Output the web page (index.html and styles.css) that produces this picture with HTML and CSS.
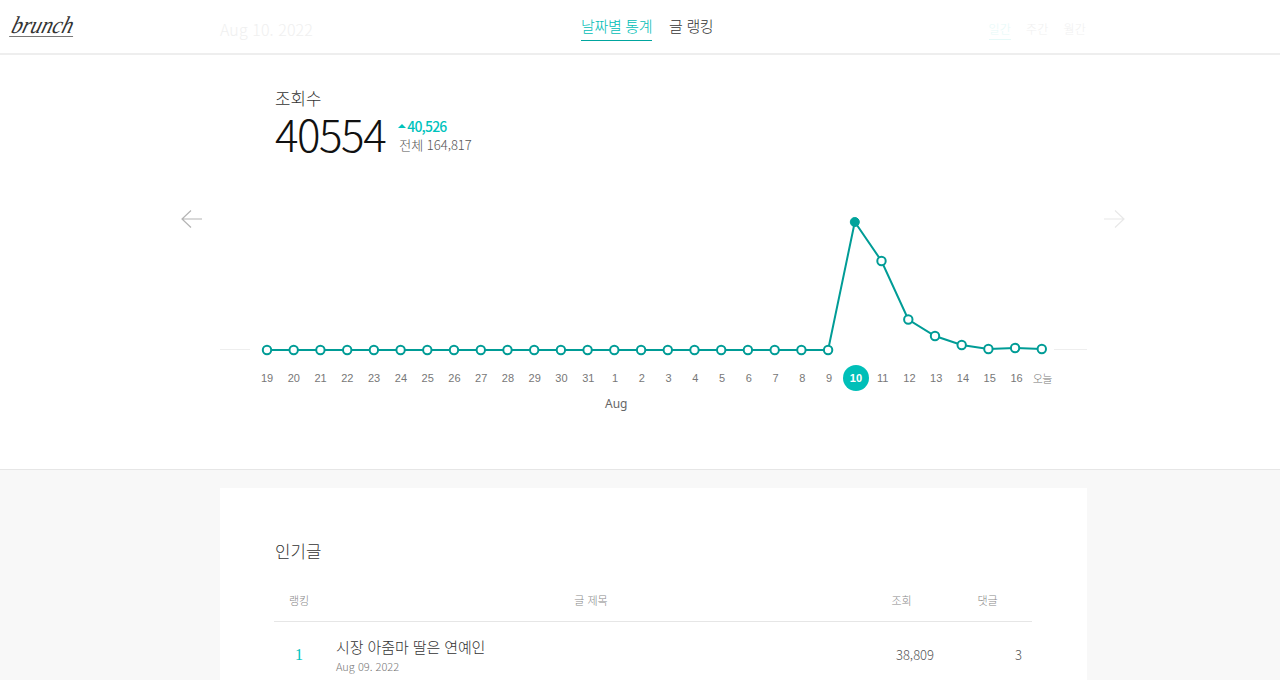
FILE: index.html
```html
<!DOCTYPE html>
<html lang="ko">
<head>
<meta charset="utf-8">
<title>brunch 통계</title>
<link rel="stylesheet" href="styles.css">
</head>
<body>
<header class="top">
  <div class="logo-cell"><span class="logo">brunch</span></div>
  <div class="top-inner">
    <div class="date">Aug 10. 2022</div>
    <nav class="tabs">
      <a class="tab on">날짜별 통계</a>
      <a class="tab">글 랭킹</a>
    </nav>
    <div class="periods">
      <a class="period on">일간</a>
      <a class="period">주간</a>
      <a class="period">월간</a>
    </div>
  </div>
</header>
<section class="stats">
  <div class="summary">
    <div class="summary-label">조회수</div>
    <div class="summary-row">
      <div class="big">40554</div>
      <div class="side">
        <div class="delta"><span class="tri"></span>40,526</div>
        <div class="total">전체 164,817</div>
      </div>
    </div>
  </div>
  <div class="chart">
    <svg class="chart-svg" width="1280" height="240" viewBox="0 180 1280 240" aria-hidden="true">
      <path class="arrow" d="M202 219H182M191 210.500L182 219L191 227.500"/>
      <path class="arrow light" d="M1104 219H1124M1115 210.500L1124 219L1115 227.500"/>
      <path class="axis" d="M220 349.500H250M1054 349.500H1087"/>
      <polyline class="line" points="267,350 293.700,350 320.400,350 347.200,350 373.900,350 400.600,350 427.300,350 454,350 480.800,350 507.500,350 534.200,350 560.900,350 587.600,350 614.300,350 641.100,350 667.800,350 694.500,350 721.200,350 747.900,350 774.700,350 801.400,350 828.100,350 854.800,222 881.500,261 908.300,319.500 935,336 961.700,345 988.400,349 1015.100,348 1041.800,349"/>
      <g class="dots">
        <circle cx="267" cy="350" r="4.200"/><circle cx="293.700" cy="350" r="4.200"/><circle cx="320.400" cy="350" r="4.200"/><circle cx="347.200" cy="350" r="4.200"/><circle cx="373.900" cy="350" r="4.200"/><circle cx="400.600" cy="350" r="4.200"/><circle cx="427.300" cy="350" r="4.200"/><circle cx="454" cy="350" r="4.200"/><circle cx="480.800" cy="350" r="4.200"/><circle cx="507.500" cy="350" r="4.200"/><circle cx="534.200" cy="350" r="4.200"/><circle cx="560.900" cy="350" r="4.200"/><circle cx="587.600" cy="350" r="4.200"/><circle cx="614.300" cy="350" r="4.200"/><circle cx="641.100" cy="350" r="4.200"/><circle cx="667.800" cy="350" r="4.200"/><circle cx="694.500" cy="350" r="4.200"/><circle cx="721.200" cy="350" r="4.200"/><circle cx="747.900" cy="350" r="4.200"/><circle cx="774.700" cy="350" r="4.200"/><circle cx="801.400" cy="350" r="4.200"/><circle cx="828.100" cy="350" r="4.200"/><circle class="cur" cx="854.800" cy="222" r="4.500"/><circle cx="881.500" cy="261" r="4.200"/><circle cx="908.300" cy="319.500" r="4.200"/><circle cx="935" cy="336" r="4.200"/><circle cx="961.700" cy="345" r="4.200"/><circle cx="988.400" cy="349" r="4.200"/><circle cx="1015.100" cy="348" r="4.200"/><circle cx="1041.800" cy="349" r="4.200"/>
      </g>
    </svg>
    <div class="days">
      <span>19</span><span>20</span><span>21</span><span>22</span><span>23</span><span>24</span><span>25</span><span>26</span><span>27</span><span>28</span><span>29</span><span>30</span><span>31</span><span>1</span><span>2</span><span>3</span><span>4</span><span>5</span><span>6</span><span>7</span><span>8</span><span>9</span><span class="sel">10</span><span>11</span><span>12</span><span>13</span><span>14</span><span>15</span><span>16</span><span class="today">오늘</span>
    </div>
    <div class="month">Aug</div>
  </div>
</section>
<main class="lower">
  <section class="card">
    <h2 class="card-title">인기글</h2>
    <div class="row head">
      <div class="c-rank">랭킹</div>
      <div class="c-title">글 제목</div>
      <div class="c-views">조회</div>
      <div class="c-comments">댓글</div>
    </div>
    <div class="row item">
      <div class="c-rank rank-num">1</div>
      <div class="c-title">
        <div class="post">시장 아줌마 딸은 연예인</div>
        <div class="post-date">Aug 09. 2022</div>
      </div>
      <div class="c-views num">38,809</div>
      <div class="c-comments num">3</div>
    </div>
  </section>
</main>
</body>
</html>
```
FILE: styles.css
```css
* { box-sizing: border-box; }
html, body { margin: 0; height: 680px; overflow: hidden; }
body {
  background: #f8f8f8;
  color: #333;
  font-family: "Noto Sans CJK KR", "Noto Sans", sans-serif;
  font-weight: 300;
}
.top {
  display: grid;
  grid-template-columns: 220px 867px 1fr;
  height: 55px;
  background: #fff;
  border-bottom: 2px solid #eee;
}
.logo-cell { padding: 14px 0 0 9px; }
.logo {
  display: inline-block;
  width: 71px;
  font: italic 400 24px/22px "Liberation Serif", serif;
  color: #333;
  border-bottom: 1px solid #777;
  transform: skewX(-16deg) scaleX(0.9);
  transform-origin: left bottom;
}
.top-inner {
  display: grid;
  grid-template-columns: 361px auto 1fr;
  align-items: start;
}
.date { font-size: 16px; line-height: 26px; padding-top: 16px; letter-spacing: 0.1px; color: #f0f0f0; }
.tabs { display: flex; gap: 17px; padding-top: 15px; }
.tab {
  display: block;
  font-size: 15px;
  line-height: 22px;
  height: 26px;
  letter-spacing: -0.35px;
  color: #333;
}
.tab.on { color: #00bdb6; border-bottom: 1px solid #00a59e; }
.periods { display: flex; justify-content: flex-end; gap: 15px; padding: 20px 1px 0 0; }
.period { display: block; font-size: 12px; line-height: 18px; height: 20px; letter-spacing: 0.2px; color: #f0f0f0; }
.period.on { color: #e6f9f8; border-bottom: 1px solid #e6f9f8; }
.stats { background: #fff; height: 415px; border-bottom: 1px solid #e6e6e6; position: relative; }
.summary { padding: 32px 0 0 275px; }
.summary-label { font-size: 16.800px; line-height: 22px; color: #333; }
.summary-row { display: flex; gap: 14px; }
.big { font-size: 44px; line-height: 48px; letter-spacing: -1.5px; color: #111; }
.side { padding-top: 7px; }
.delta { display: flex; align-items: center; font-size: 14px; line-height: 20px; font-weight: 500; letter-spacing: -0.8px; margin-left: -1px; color: #00c3bd; }
.tri { width: 0; height: 0; margin-right: 1px; border: 4px solid transparent; border-top: 0; border-bottom: 4px solid #00c3bd; }
.total { font-size: 13px; line-height: 18px; color: #555; }
.chart-svg { position: absolute; left: 0; top: 125px; }
.arrow { fill: none; stroke: #b4b4b4; stroke-width: 1.2; }
.arrow.light { stroke: #e8e8e8; }
.axis { fill: none; stroke: #eee; stroke-width: 1; }
.line { fill: none; stroke: #009c96; stroke-width: 2; }
.dots circle { fill: #fff; stroke: #009c96; stroke-width: 2; }
.dots .cur { fill: #00a39b; stroke: #00a39b; stroke-width: 1; }
.chart { position: absolute; left: 0; top: 0; width: 100%; }
.days {
  display: flex;
  position: absolute;
  left: 253.700px;
  top: 310px;
  width: 803px;
}
.days span {
  flex: 1 1 0;
  text-align: center;
  font: 400 11px/26px "Liberation Sans", Arial, sans-serif;
  color: #777;
}
.days .sel {
  position: relative;
  z-index: 0;
  color: #fff;
  font-weight: 700;
}
.days .sel::before {
  content: "";
  position: absolute;
  z-index: -1;
  left: 0;
  top: 0;
  width: 26px;
  height: 26px;
  border-radius: 50%;
  background: #00bfb8;
}
.days .today { font-family: "Noto Sans CJK KR", sans-serif; font-weight: 300; letter-spacing: -0.5px; transform: translateX(-1px); }
.month {
  position: absolute;
  left: 605px;
  top: 340px;
  font: 400 12px/18px "Noto Sans", sans-serif;
  color: #666;
}
.lower { padding: 18px 0 0 220px; }
.card { width: 867px; height: 300px; background: #fff; padding: 49px 54px 0; }
.card-title { margin: 0; padding: 1px 0 0 1px; height: 26px; font-size: 16.800px; line-height: 26px; font-weight: 300; color: #333; }
.row { display: grid; grid-template-columns: 50px 534px 87px 1fr; width: 758px; }
.head {
  margin-top: 25px;
  height: 34px;
  align-items: center;
  border-bottom: 1px solid #e6e6e6;
  font-size: 11px;
  color: #888;
  padding-bottom: 10px;
  text-align: center;
}
.head .c-comments { padding-right: 2px; }
.item { padding-top: 14px; align-items: center; }
.item .c-title { padding-left: 12px; }
.rank-num { text-align: center; font: 400 16px/20px "Liberation Serif", serif; color: #00c3bd; }
.post { font-size: 15px; line-height: 21px; letter-spacing: -0.1px; color: #333; }
.post-date { font-size: 11px; line-height: 16px; margin-top: 1px; color: #777; }
.num { font-size: 13px; color: #555; padding-bottom: 2px; }
.c-views.num { text-align: right; padding-right: 11px; }
.c-comments.num { text-align: right; padding-right: 10px; }
```
